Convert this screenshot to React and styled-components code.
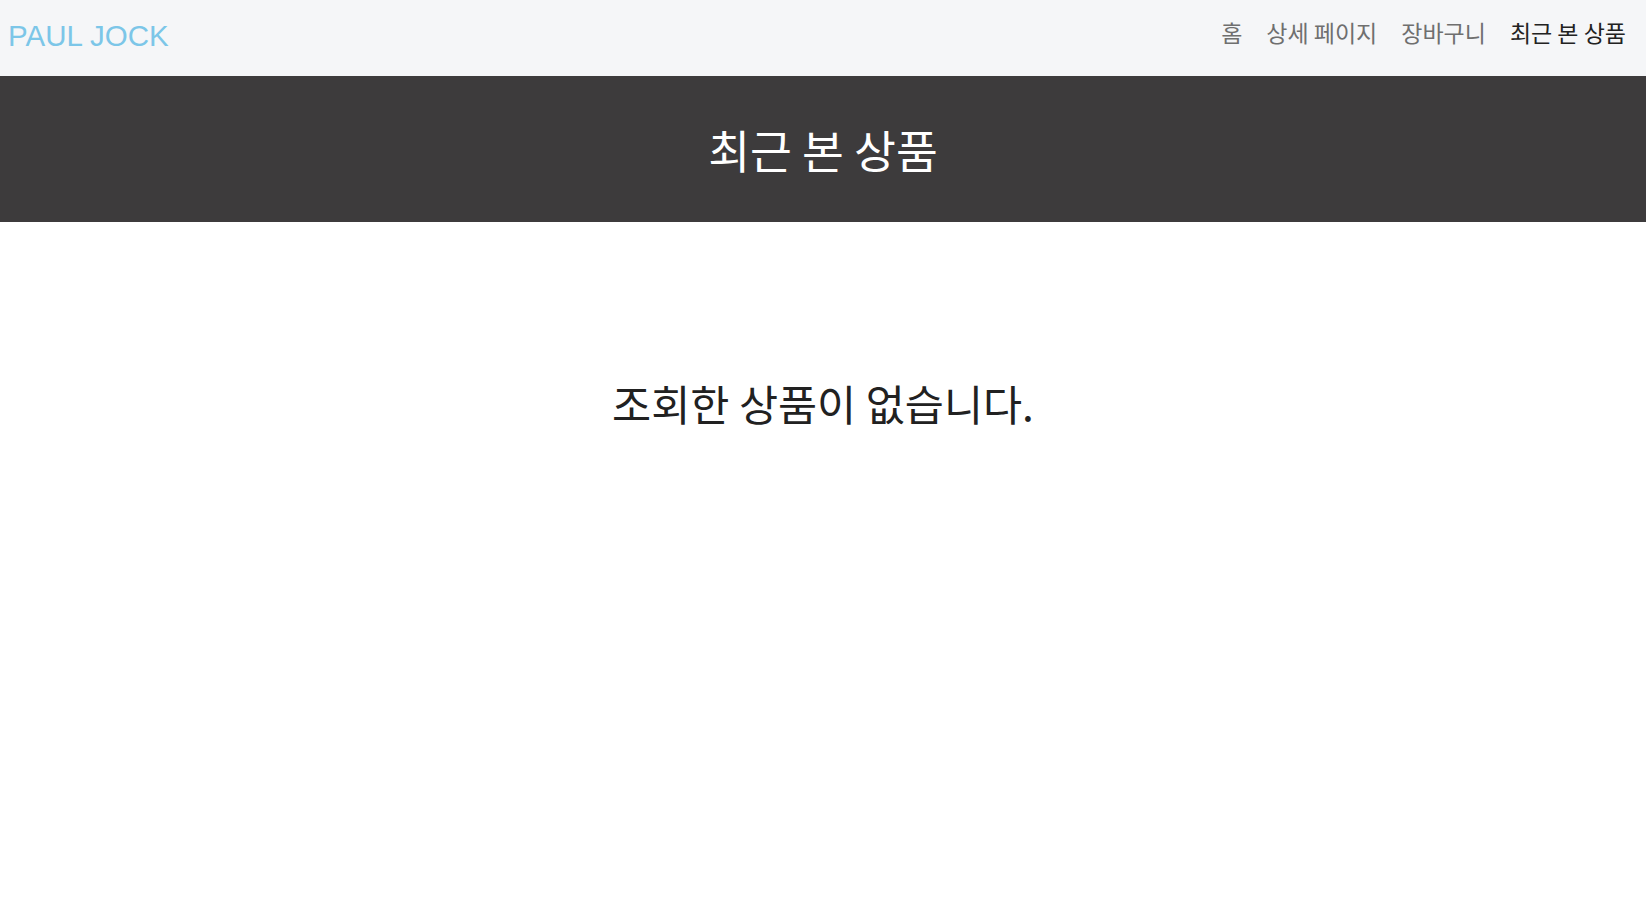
import React from 'react';
import styled, { createGlobalStyle } from 'styled-components';

const GlobalStyle = createGlobalStyle`
  body {
    margin: 0;
    background: #ffffff;
    font-family: "Liberation Sans", "Noto Sans CJK KR", sans-serif;
  }
`;

const Navbar = styled.nav`
  height: 76px;
  background-color: #f5f6f8;
  display: flex;
  align-items: center;
  justify-content: space-between;
  padding: 0 8px;
  box-sizing: border-box;
`;

const Brand = styled.a`
  font-family: "Liberation Sans", Arial, sans-serif;
  font-size: 29.5px;
  line-height: 1.2;
  color: #7cc6e8;
  text-decoration: none;
  margin-bottom: 5px;
`;

const NavList = styled.ul`
  list-style: none;
  margin: 0 0 11px 0;
  padding: 0;
  display: flex;
  align-items: center;
`;

const NavLink = styled.li`
  font-family: "Noto Sans CJK KR", sans-serif;
  font-size: 23px;
  line-height: 1.2;
  padding: 0 12px;
  color: ${props => (props.active ? '#222222' : '#6f6f6f')};
  cursor: pointer;
`;

const Banner = styled.header`
  height: 146px;
  background-color: #3d3b3c;
  display: flex;
  align-items: center;
  justify-content: center;
`;

const BannerTitle = styled.h1`
  margin: 0;
  font-family: "Noto Sans CJK KR", sans-serif;
  font-weight: 400;
  font-size: 45.5px;
  line-height: 1.2;
  color: #ffffff;
`;

const Main = styled.main`
  display: flex;
  justify-content: center;
  padding-top: 155px;
`;

const EmptyMessage = styled.h2`
  margin: 0;
  font-family: "Noto Sans CJK KR", sans-serif;
  font-weight: 400;
  font-size: 42.5px;
  line-height: 1.2;
  color: #212121;
`;

const App = () => {
  return (
    <>
      <GlobalStyle />
      <Navbar>
        <Brand href="#">PAUL JOCK</Brand>
        <NavList>
          <NavLink>홈</NavLink>
          <NavLink>상세 페이지</NavLink>
          <NavLink>장바구니</NavLink>
          <NavLink active>최근 본 상품</NavLink>
        </NavList>
      </Navbar>
      <Banner>
        <BannerTitle>최근 본 상품</BannerTitle>
      </Banner>
      <Main>
        <EmptyMessage>조회한 상품이 없습니다.</EmptyMessage>
      </Main>
    </>
  );
};

export default App;
